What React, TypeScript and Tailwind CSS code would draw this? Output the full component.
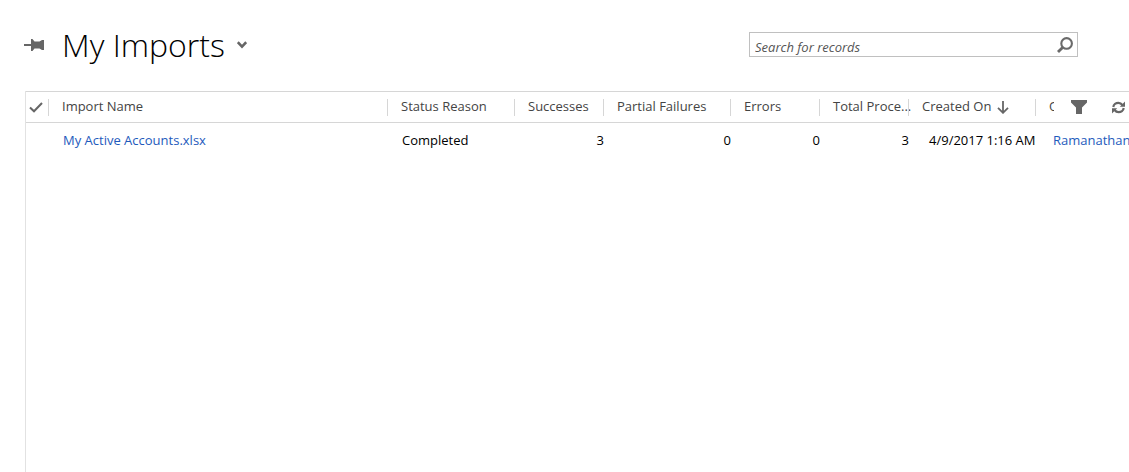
const columns = [
  { label: 'Status Reason', width: 'w-[127px]' },
  { label: 'Successes', width: 'w-[89px]' },
  { label: 'Partial Failures', width: 'w-[127px]' },
  { label: 'Errors', width: 'w-[89px]' },
  { label: 'Total Proce...', width: 'w-[89px]' },
]

const records = [
  {
    name: 'My Active Accounts.xlsx',
    status: 'Completed',
    successes: 3,
    partial: 0,
    errors: 0,
    total: 3,
    created: '4/9/2017 1:16 AM',
    owner: 'Ramanathan',
  },
]

function PinIcon() {
  return (
    <svg width="20" height="14" viewBox="0 0 20 14" fill="#666" aria-hidden="true">
      <path d="M0 6h7V1h1.5l2 2.5h5L18 2h2v10h-2l-2.5-1.5h-5l-2 2.5H7V8H0z" />
    </svg>
  )
}

function ChevronIcon() {
  return (
    <svg width="10" height="8" viewBox="0 0 10 8" fill="none" stroke="#666" strokeWidth="2.6" aria-hidden="true">
      <path d="M0.8 1.2L5 5.6L9.2 1.2" />
    </svg>
  )
}

function SearchIcon() {
  return (
    <svg width="16" height="16" viewBox="0 0 16 16" fill="none" stroke="#6a6a6a" aria-hidden="true">
      <circle cx="9.6" cy="6.4" r="5.3" strokeWidth="2.1" />
      <path d="M5.6 10.4L1 15" strokeWidth="2.8" />
    </svg>
  )
}

function CheckIcon() {
  return (
    <svg width="14" height="11" viewBox="0 0 14 11" fill="none" stroke="#666" strokeWidth="2" aria-hidden="true">
      <path d="M1 5.5L5 9.3L13 1" />
    </svg>
  )
}

function ArrowDownIcon() {
  return (
    <svg width="12" height="13" viewBox="0 0 12 13" fill="none" stroke="#666" strokeWidth="1.8" aria-hidden="true">
      <path d="M6 0v11.5M1 6.8l5 5l5-5" />
    </svg>
  )
}

function FilterIcon() {
  return (
    <svg width="16" height="14" viewBox="0 0 16 14" fill="#666" aria-hidden="true">
      <path d="M0 0h16v2.5L11 7.5V14H5V7.5L0 2.5z" />
    </svg>
  )
}

function RefreshIcon() {
  return (
    <svg width="13" height="13" viewBox="0 0 13 13" fill="none" stroke="#666" strokeWidth="2.2" aria-hidden="true">
      <path d="M1.3 6C1.6 3.4 4 1.8 6.4 1.8C8.2 1.8 9.4 2.6 10.4 4M11.7 7C11.4 9.6 9 11.2 6.6 11.2C4.8 11.2 3.6 10.4 2.6 9" />
      <path d="M13 0.5v5.2h-5.2zM0 12.5v-5.2h5.2z" fill="#666" stroke="none" />
    </svg>
  )
}

function Separator() {
  return <span className="h-[17px] w-px shrink-0 bg-[#d6d6d6]" />
}

export default function App() {
  return (
    <main className="flex min-h-screen flex-col overflow-hidden bg-white font-['Open_Sans','Noto_Sans',sans-serif] text-[13px] text-black">
      <header className="flex h-[91px] shrink-0 items-center justify-between pr-[51px] pb-0.5 pl-6">
        <div className="flex items-center">
          <button type="button" aria-label="Pin view">
            <PinIcon />
          </button>
          <h1 className="ml-[18px] text-[32px] leading-10 font-light">My Imports</h1>
          <button type="button" aria-label="Select view" className="ml-3">
            <ChevronIcon />
          </button>
        </div>
        <form role="search" className="flex h-[25px] w-[329px] items-center border border-[#c0c0c0]">
          <input
            type="text"
            aria-label="Search for records"
            placeholder="Search for records"
            className="h-full min-w-0 flex-1 px-[5px] pt-1 italic outline-none placeholder:text-[#555]"
          />
          <button type="button" aria-label="Search" className="mr-1">
            <SearchIcon />
          </button>
        </form>
      </header>

      <section className="ml-[25px] flex-1 border-l border-[#e2e2e2]">
        <table className="w-full table-fixed border-collapse whitespace-nowrap">
          <thead>
            <tr className="h-[31px] border-y border-[#d6d6d6] text-left text-[#444]">
              <th className="w-[23px] p-0 font-normal">
                <div className="flex items-center justify-between">
                  <button type="button" aria-label="Select all records" className="ml-[3px]">
                    <CheckIcon />
                  </button>
                  <Separator />
                </div>
              </th>
              <th className="w-[339px] p-0 font-normal">
                <div className="flex items-center justify-between">
                  <span className="pl-[13px]">Import Name</span>
                  <Separator />
                </div>
              </th>
              {columns.map((column) => (
                <th key={column.label} className={`${column.width} p-0 font-normal`}>
                  <div className="flex items-center">
                    <span className="min-w-0 flex-1 pl-[13px]">{column.label}</span>
                    <Separator />
                  </div>
                </th>
              ))}
              <th className="w-[127px] p-0 font-normal" aria-sort="descending">
                <div className="flex items-center">
                  <span className="pl-[13px]">Created On</span>
                  <span className="ml-[6px] flex-1">
                    <ArrowDownIcon />
                  </span>
                  <Separator />
                </div>
              </th>
              <th className="p-0 font-normal">
                <div className="flex items-center">
                  <span className="ml-[13px] w-[5px] overflow-hidden">Owner</span>
                  <button type="button" aria-label="Filter" className="ml-[17px]">
                    <FilterIcon />
                  </button>
                  <button type="button" aria-label="Refresh" className="ml-[25px] shrink-0">
                    <RefreshIcon />
                  </button>
                </div>
              </th>
            </tr>
          </thead>
          <tbody>
            {records.map((record) => (
              <tr key={record.name} className="h-9">
                <td className="p-0" />
                <td className="p-0 pl-[14px]">
                  <a href="#record" className="text-[#1e5abc]">{record.name}</a>
                </td>
                <td className="p-0 pl-[14px]">{record.status}</td>
                <td className="p-0 text-right">{record.successes}</td>
                <td className="p-0 text-right">{record.partial}</td>
                <td className="p-0 text-right">{record.errors}</td>
                <td className="p-0 text-right">{record.total}</td>
                <td className="p-0 pl-5">{record.created}</td>
                <td className="p-0 pl-[17px]">
                  <a href="#owner" className="text-[#1e5abc]">{record.owner}</a>
                </td>
              </tr>
            ))}
          </tbody>
        </table>
      </section>
    </main>
  )
}
